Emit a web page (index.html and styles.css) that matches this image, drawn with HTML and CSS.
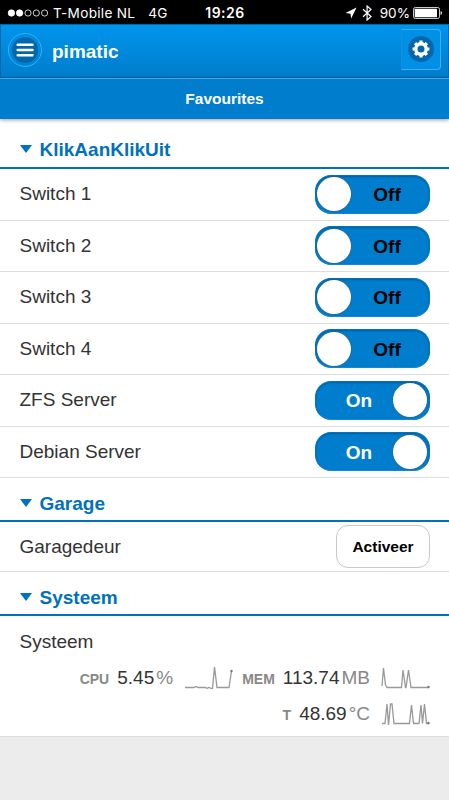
FILE: index.html
```html
<!DOCTYPE html>
<html lang="nl">
<head>
    <meta charset="UTF-8">
    <meta name="viewport" content="width=device-width, initial-scale=1.0">
    <title>pimatic</title>
    <link rel="stylesheet" href="styles.css">
</head>
<body>

    <div class="status-bar">
        <div class="status-left">
            <svg class="signal" width="42" height="10" viewBox="0 0 42 10">
                <g stroke="#fff" stroke-width="0.8">
                    <circle cx="4.4" cy="5" r="3.2" fill="#fff"/>
                    <circle cx="12.6" cy="5" r="3.2" fill="#fff"/>
                    <circle cx="21" cy="5" r="3.1" fill="none"/>
                    <circle cx="29.3" cy="5" r="3.1" fill="none"/>
                    <circle cx="37.6" cy="5" r="3.1" fill="none"/>
                </g>
            </svg>
            <span class="carrier">T-Mobile NL</span>
            <span class="network">4G</span>
        </div>
        <span class="clock">19:26</span>
        <div class="status-right">
            <svg width="12" height="12" viewBox="0 0 12 12"><path d="M11.500 .5L.5 6l5 .7L6.200 11.500z" fill="#fff"/></svg>
            <svg class="bluetooth" width="10" height="16" viewBox="0 0 10 16"><path d="M1 4.3l8 7.2L5.1 15V1L9 4.5l-8 7.2" fill="none" stroke="#fff" stroke-width="1.2"/></svg>
            <span class="percent">90%</span>
            <svg class="battery" width="30" height="12" viewBox="0 0 30 12">
                <rect x="0.5" y="0.5" width="26" height="11" rx="1.8" fill="none" stroke="#fff" stroke-width="0.8"/>
                <rect x="1.7" y="1.7" width="22.3" height="8.6" rx="0.6" fill="#fff"/>
                <path d="M27.6 4v4c1.7-.4 1.7-3.6 0-4z" fill="#fff"/>
            </svg>
        </div>
    </div>

    <div class="header">
        <a class="menu-button">
            <svg width="26" height="26" viewBox="0 0 26 26">
                <circle cx="13" cy="13" r="13" fill="#0068aa"/>
                <path d="M5.7 7.8h14.8M5.7 13h14.8M5.7 18.2h14.8" stroke="#fff" stroke-width="2.5" stroke-linecap="round"/>
            </svg>
        </a>
        <h1>pimatic</h1>
        <a class="settings-button">
            <svg width="26" height="26" viewBox="0 0 26 26">
                <circle cx="13" cy="13" r="13" fill="#0068aa"/>
                <circle cx="13" cy="13" r="5.2" fill="none" stroke="#fff" stroke-width="3.4"/>
                <path d="M13 4.6v2.6M13 18.8v2.6M4.6 13h2.6M18.8 13h2.6M7.1 7.1l1.8 1.8M17.1 17.1l1.8 1.8M7.1 18.9l1.8-1.8M17.1 8.9l1.8-1.8" stroke="#fff" stroke-width="3.2"/>
            </svg>
        </a>
    </div>
    <div class="navbar">Favourites</div>

    <div class="content">
        <h2 class="group-title">KlikAanKlikUit</h2>
        <div class="row">
            <span>Switch 1</span>
            <div class="switch off"><span class="knob"></span><span class="label">Off</span></div>
        </div>
        <div class="row">
            <span>Switch 2</span>
            <div class="switch off"><span class="knob"></span><span class="label">Off</span></div>
        </div>
        <div class="row">
            <span>Switch 3</span>
            <div class="switch off"><span class="knob"></span><span class="label">Off</span></div>
        </div>
        <div class="row">
            <span>Switch 4</span>
            <div class="switch off"><span class="knob"></span><span class="label">Off</span></div>
        </div>
        <div class="row">
            <span>ZFS Server</span>
            <div class="switch on"><span class="label">On</span><span class="knob"></span></div>
        </div>
        <div class="row">
            <span>Debian Server</span>
            <div class="switch on"><span class="label">On</span><span class="knob"></span></div>
        </div>

        <h2 class="group-title small">Garage</h2>
        <div class="row garage">
            <span>Garagedeur</span>
            <button class="activate">Activeer</button>
        </div>

        <h2 class="group-title small">Systeem</h2>
        <div class="system">
            <div class="system-name">Systeem</div>
            <div class="values">
                <div class="value">
                    <span class="key">CPU</span><span class="number">5.45</span><span class="unit">%</span>
                    <svg class="spark" width="50" height="26" viewBox="0 0 50 26">
                        <path d="M1 22.5h9l2-1 2 1h7l2 .8 2-.8 2 .8h1.5L30.5 2l2.5 20.5h12L47.5 6"/>
                        <circle cx="47.5" cy="6" r="1.2"/>
                    </svg>
                </div>
                <div class="value">
                    <span class="key">MEM</span><span class="number">113.74</span><span class="unit">MB</span>
                    <svg class="spark" width="50" height="26" viewBox="0 0 50 26">
                        <path d="M1 21L2.5 3l2 17 1.5 2.5h14.5L22 5l2.5 17.5h.5L27.5 5l2.5 17.5h17.5"/>
                        <circle cx="47.5" cy="22" r="1.2"/>
                    </svg>
                </div>
                <div class="value">
                    <span class="key">T</span><span class="number">48.69</span><span class="unit">°C</span>
                    <svg class="spark" width="50" height="26" viewBox="0 0 50 26">
                        <path d="M1 22.5h3L6 3l1.5 21L9.500 3H11l2 19.5h15.500L30.500 4l2 18.500H38L40 4l1.500 18.500L43.500 3l2 19.500h2"/>
                        <circle cx="47.5" cy="22" r="1.2"/>
                    </svg>
                </div>
            </div>
        </div>
    </div>

</body>
</html>
```

FILE: styles.css
```css
* {
    box-sizing: border-box;
}

body {
    margin: 0;
    min-height: 800px;
    background-color: #ececec;
    color: #333;
    font-family: "Liberation Sans", Arial, sans-serif;
    font-size: 19px;
}

svg {
    display: block;
    flex-shrink: 0;
}

/* Phone status bar */
.status-bar {
    display: grid;
    grid-template-columns: 1fr auto 1fr;
    align-items: center;
    height: 24px;
    padding: 1px 6px 0 7px;
    background-color: #000;
    color: #fff;
    font-family: Inter, "Liberation Sans", sans-serif;
    font-size: 13.6px;
    white-space: nowrap;
}

.status-left,
.status-right {
    display: flex;
    align-items: center;
}

.status-right {
    justify-content: flex-end;
}

.carrier {
    margin-left: 4px;
    letter-spacing: 0.3px;
}

.network {
    margin-left: 13px;
}

.clock {
    font-weight: 600;
    font-size: 14px;
    letter-spacing: 0.5px;
}

.bluetooth {
    margin-left: 5px;
}

.percent {
    margin: 0 3px 0 8px;
}

/* Header */
.header {
    display: flex;
    align-items: center;
    height: 54px;
    padding: 0 7px 3px 7px;
    border: 1px solid #0068aa;
    background: linear-gradient(#0095ed, #007dcb);
    color: #fff;
}

.menu-button {
    padding: 3px;
    border: 1px solid #38aff5;
    border-radius: 50%;
    box-shadow: inset 0 0 0 1px #0089dc;
}

h1 {
    flex: 1;
    margin: 4px 0 0 10px;
    font-size: 19px;
    line-height: 22px;
}

.settings-button {
    padding: 6px 6px 7px;
    border: 1px solid #42aef0;
    border-left-color: #198fda;
    border-radius: 0 4px 4px 0;
    background-color: #0090e7;
}

.navbar {
    position: relative;
    height: 41px;
    border-top: 1px solid #48a6e0;
    background-color: #007dcd;
    box-shadow: 0 1px 4px rgba(0, 0, 0, 0.4);
    color: #fff;
    font-size: 15.5px;
    font-weight: bold;
    line-height: 40px;
    text-align: center;
}

/* Device groups */
.content {
    background-color: #fff;
}

.group-title {
    display: flex;
    align-items: center;
    height: 50px;
    margin: 0;
    padding: 13px 19px 0;
    border-bottom: 2px solid #0071bc;
    color: #0071bc;
    font-size: 19px;
}

.group-title::before {
    content: "";
    margin: 0 8px 1px 0.5px;
    border: 6px solid transparent;
    border-top: 8px solid #0071bc;
    border-bottom: 0;
}

.group-title.small {
    height: 44px;
    padding-top: 9px;
}

.row {
    display: flex;
    align-items: center;
    justify-content: space-between;
    height: 51.5px;
    padding: 0 19px 0 19.5px;
    border-bottom: 1px solid #ddd;
}

.row.garage {
    height: 50px;
}

.switch {
    display: flex;
    align-items: center;
    width: 115px;
    height: 39px;
    padding: 2px 2px 2px 1px;
    border: 1px solid #0074c0;
    border-bottom-color: #1687d1;
    border-radius: 16px;
    background-color: #007dcd;
    box-shadow: inset 0 1px 2px rgba(0, 0, 0, 0.25);
    font-weight: bold;
}

.knob {
    width: 34px;
    height: 34px;
    border-radius: 50%;
    background-color: #fff;
    box-shadow: 0 0 2px #555;
}

.label {
    flex: 1;
    padding-top: 2px;
    text-align: center;
}

.off .label {
    padding-right: 4px;
    color: #000;
}

.on .label {
    padding-left: 8px;
    color: #fff;
}

.activate {
    width: 94px;
    height: 43px;
    padding: 0;
    border: 1px solid #c8c8c8;
    border-radius: 12px;
    background-color: #fff;
    color: #000;
    font-family: inherit;
    font-size: 15.5px;
    font-weight: bold;
}

/* System values with sparklines */
.system {
    height: 121px;
    padding: 15px 18px 0 19.5px;
    border-bottom: 1px solid #ddd;
}

.system-name {
    line-height: 22px;
}

.values {
    display: flex;
    flex-wrap: wrap;
    justify-content: flex-end;
    column-gap: 8px;
    padding-top: 7px;
}

.value {
    display: flex;
    align-items: center;
    height: 36px;
}

.key {
    padding-top: 2px;
    margin-right: 8px;
    color: #888;
    font-size: 14px;
    font-weight: bold;
}

.unit {
    margin-left: 2px;
    color: #888;
}

.spark {
    margin-left: 11px;
    fill: none;
    stroke: #999;
    stroke-width: 1.3;
}

.spark circle {
    fill: #777;
    stroke: none;
}
```
